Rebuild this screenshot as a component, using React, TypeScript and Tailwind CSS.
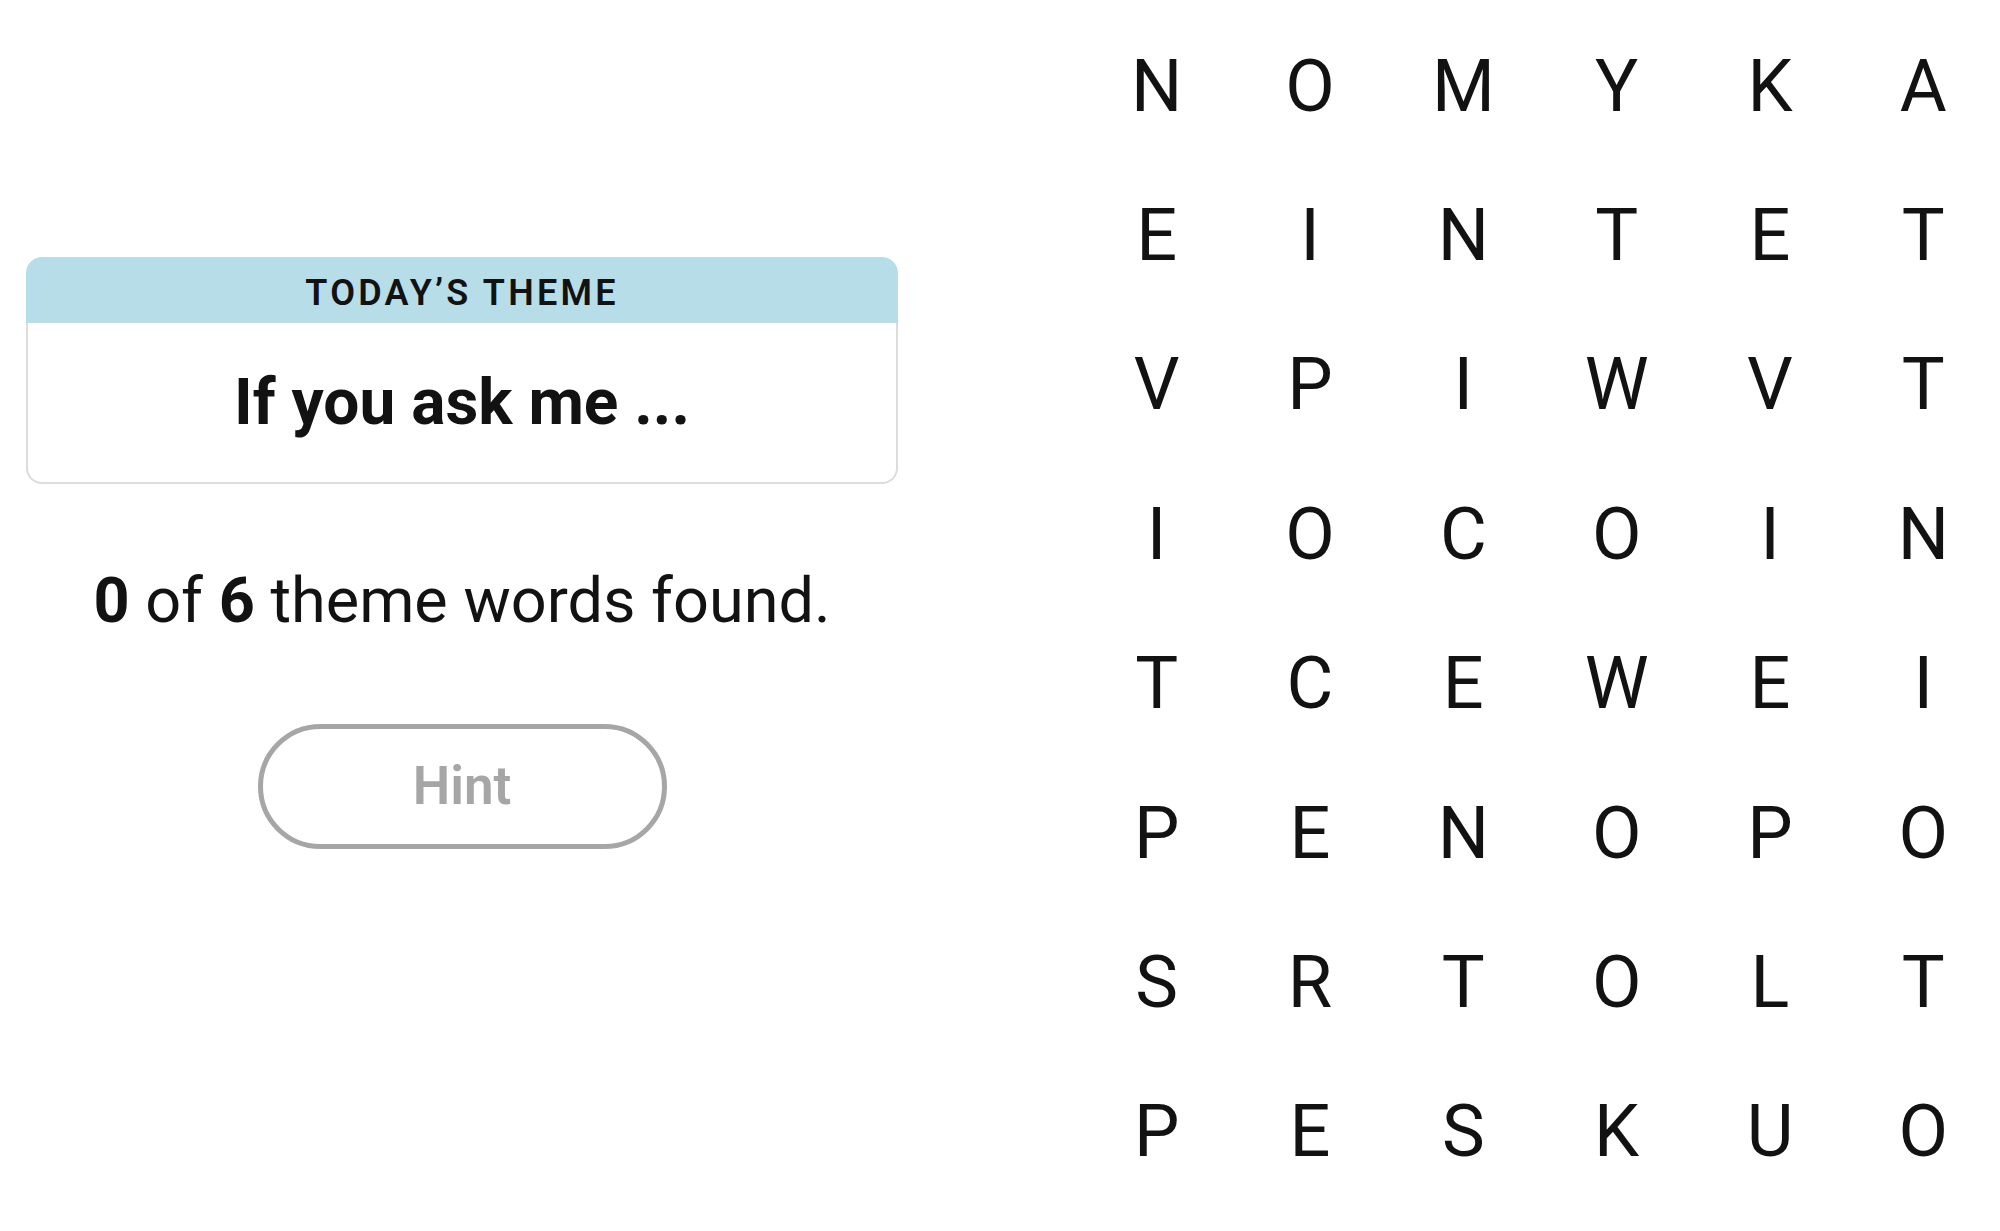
const grid = [
  'NOMYKA',
  'EINTET',
  'VPIWVT',
  'IOCOIN',
  'TCEWEI',
  'PENOPO',
  'SRTOLT',
  'PESKUO',
]

function ThemeCard({ theme }: { theme: string }) {
  return (
    <div className="w-full">
      <div className="flex h-[66px] items-center justify-center rounded-t-[16px] bg-[#b7dde9] pt-[5px]">
        <span className="text-[36px] leading-none font-semibold tracking-[0.09em] text-[#121212]">
          TODAY’S THEME
        </span>
      </div>
      <div className="flex h-[161px] items-center justify-center rounded-b-[16px] border-2 border-t-0 border-[#dcdcdc]">
        <span className="text-[64px] leading-none font-bold text-[#121212]">{theme}</span>
      </div>
    </div>
  )
}

function LetterGrid({ rows }: { rows: string[] }) {
  return (
    <div className="grid h-[1195px] w-[920px] grid-cols-6 grid-rows-8">
      {rows.flatMap((row, r) =>
        row.split('').map((ch, c) => (
          <div key={`${r}-${c}`} className="flex items-center justify-center">
            <span className="text-[72px] leading-none font-normal text-[#121212]">{ch}</span>
          </div>
        )),
      )}
    </div>
  )
}

export default function App() {
  const found = 0
  const total = 6
  return (
    <div
      className="flex h-[1231px] w-[2000px] overflow-hidden bg-white"
      style={{ fontFamily: 'Roboto, "Liberation Sans", sans-serif' }}
    >
      <div className="flex w-[924px] flex-col items-center px-[26px] pt-[257px]">
        <ThemeCard theme="If you ask me ..." />

        <p className="mt-[85px] text-[63px] leading-none text-[#121212]">
          <span className="font-bold">{found}</span> of <span className="font-bold">{total}</span> theme
          words found.
        </p>

        <button className="mt-[92px] flex h-[125px] w-[409px] items-center justify-center rounded-full border-[5px] border-[#a6a6a6] bg-white">
          <span className="text-[53px] leading-none font-semibold text-[#a6a6a6]">Hint</span>
        </button>
      </div>

      <div className="ml-[156px] pt-[12px]">
        <LetterGrid rows={grid} />
      </div>
    </div>
  )
}
